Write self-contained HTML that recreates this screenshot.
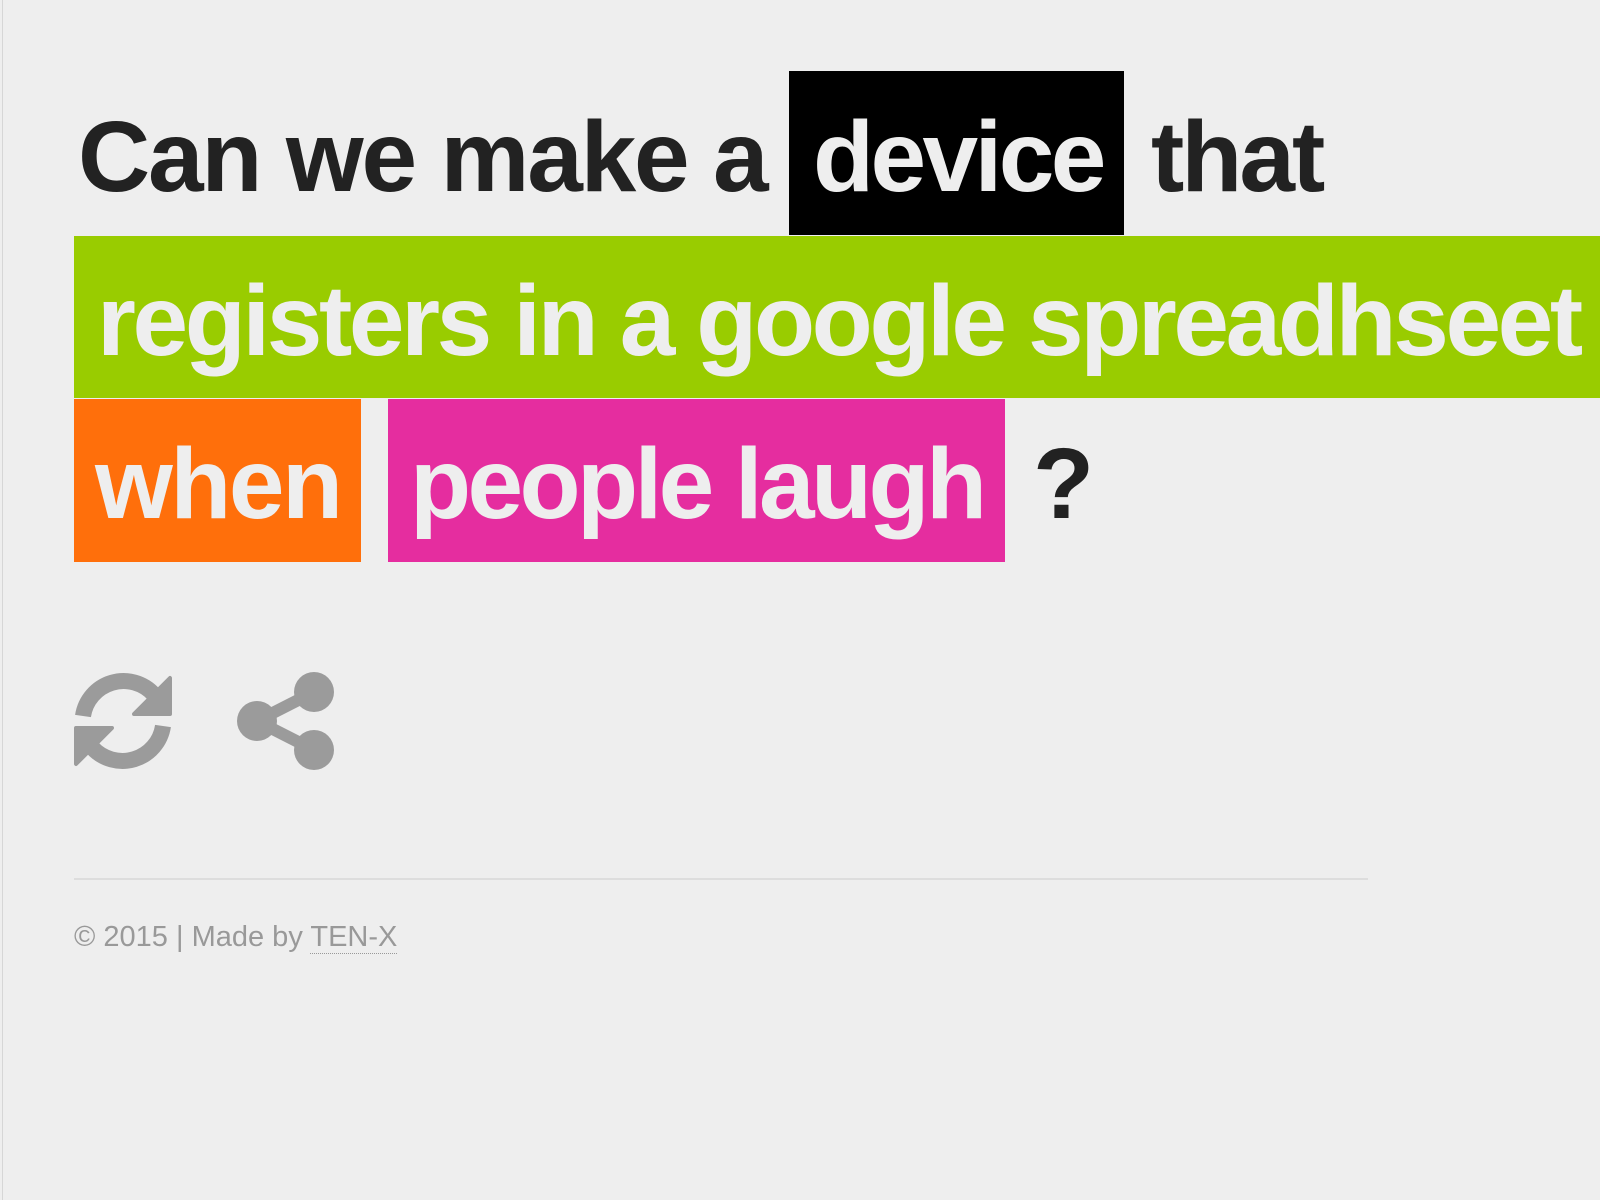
<!DOCTYPE html>
<html><head><meta charset="utf-8"><style>
html,body{margin:0;padding:0;width:1600px;height:1200px;overflow:hidden;background:#eeeeee;}
body{position:relative;font-family:"Liberation Sans",Arial,sans-serif;}
.lb{position:absolute;left:2px;top:0;width:1px;height:1200px;background:#d6d6d6;}
.t{position:absolute;font-weight:bold;font-size:100px;line-height:163px;height:163px;white-space:nowrap;color:#222;}
.b{position:absolute;}
</style></head><body>
<div class="lb"></div>
<div class="t" style="left:78px;top:76px;letter-spacing:-2.2px;">Can we make a</div>
<div class="b" style="left:789px;top:71px;width:335px;height:164px;background:#000;"></div>
<div class="t" style="left:813px;top:76px;color:#eee;letter-spacing:-3.6px;">device</div>
<div class="t" style="left:1151px;top:76px;letter-spacing:-3px;">that</div>
<div class="b" style="left:74px;top:236px;width:1526px;height:162px;background:#99cc00;"></div>
<div class="t" style="left:97px;top:240px;color:#eee;letter-spacing:-3.4px;">registers in a google spreadhseet</div>
<div class="b" style="left:74px;top:399px;width:287px;height:163px;background:#ff6f0b;"></div>
<div class="t" style="left:95px;top:403px;color:#eee;letter-spacing:-2.5px;">when</div>
<div class="b" style="left:388px;top:399px;width:617px;height:163px;background:#e52d9f;"></div>
<div class="t" style="left:410px;top:403px;color:#eee;letter-spacing:-3.6px;">people laugh</div>
<div class="t" style="left:1033px;top:403px;">?</div>

<svg style="position:absolute;left:74px;top:672px" width="98" height="98" viewBox="0 0 98 98">
<g fill="none" stroke="#9b9b9b" stroke-width="16">
<path d="M9 44 A41 41 0 0 1 80 22.6"/>
<path d="M89 54 A41 41 0 0 1 18 75.4"/>
</g>
<g fill="#9b9b9b" stroke="#9b9b9b" stroke-width="4" stroke-linejoin="round">
<polygon points="96,6 96,42 60,42"/>
<polygon points="2,92 2,56 38,56"/>
</g>
</svg>
<svg style="position:absolute;left:236px;top:670px" width="100" height="100" viewBox="236 670 100 100">
<g stroke="#9b9b9b" stroke-width="12"><line x1="257" y1="721" x2="314" y2="692"/><line x1="257" y1="721" x2="314" y2="750"/></g>
<g fill="#9b9b9b"><circle cx="314" cy="692" r="20"/><circle cx="257" cy="721" r="20"/><circle cx="314" cy="750" r="20"/></g>
</svg>

<div class="b" style="left:74px;top:878px;width:1294px;height:2px;background:#dddddd;"></div>
<div style="position:absolute;left:74px;top:920px;font-size:29px;line-height:34px;color:#999;white-space:nowrap;">© 2015 | Made by <span style="border-bottom:1px dotted #999;">TEN-X</span></div>
</body></html>
